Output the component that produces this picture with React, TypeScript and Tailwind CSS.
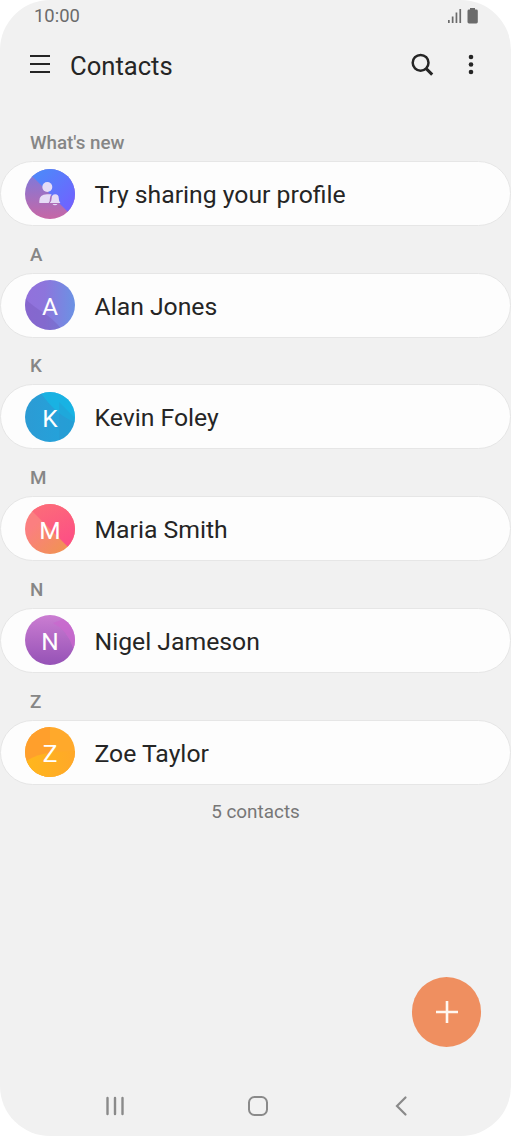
import type { ReactNode } from "react";

type Contact = {
  name: string;
  avatar: ReactNode;
};

const contacts: Contact[] = [
  {
    name: "Alan Jones",
    avatar: (
      <>
        <rect width="50" height="50" fill="url(#alan)" />
        <path d="M0 18C10 30 26 34 37 50H0Z" fill="#6c50b0" opacity="0.3" />
      </>
    ),
  },
  {
    name: "Kevin Foley",
    avatar: (
      <>
        <rect width="50" height="50" fill="url(#kevin)" />
        <path d="M15 0H50V30Q32 24 15 0Z" fill="#13bce8" opacity="0.65" />
        <path d="M34 10L50 26V50H34Z" fill="#2c94cc" opacity="0.35" />
      </>
    ),
  },
  {
    name: "Maria Smith",
    avatar: (
      <>
        <rect width="50" height="50" fill="url(#mariaLow)" />
        <path d="M0 0L8 8L43 43L50 50V0Z" fill="url(#mariaTop)" />
      </>
    ),
  },
  {
    name: "Nigel Jameson",
    avatar: (
      <>
        <rect width="50" height="50" fill="url(#nigel)" />
        <path d="M28 8Q43 16 48 33L50 33V0Z" fill="#c968ce" opacity="0.75" />
      </>
    ),
  },
  {
    name: "Zoe Taylor",
    avatar: (
      <>
        <rect width="50" height="50" fill="#ffa92b" />
        <path d="M0 0H25V50H0Z" fill="#ff9f2c" />
        <path d="M0 35Q14 24 50 24V50H0Z" fill="url(#zoe)" />
      </>
    ),
  },
];

const Gradients = () => (
  <svg className="absolute h-0 w-0" aria-hidden="true">
    <defs>
      <linearGradient id="profileTop" x1="0" y1="0" x2="1" y2="1">
        <stop offset="0.2" stopColor="#5086fa" />
        <stop offset="0.85" stopColor="#7062ff" />
      </linearGradient>
      <linearGradient id="profileLow" x1="0" y1="0" x2="0" y2="1">
        <stop offset="0.15" stopColor="#8278d8" />
        <stop offset="1" stopColor="#c767a5" />
      </linearGradient>
      <linearGradient id="alan">
        <stop stopColor="#9271dc" />
        <stop offset="0.4" stopColor="#8d75dc" />
        <stop offset="1" stopColor="#6b92e4" />
      </linearGradient>
      <linearGradient id="kevin">
        <stop stopColor="#2c9bd4" />
        <stop offset="1" stopColor="#22a4dc" />
      </linearGradient>
      <linearGradient id="mariaTop" x1="0.3" y1="0" x2="0.8" y2="1">
        <stop stopColor="#fc6c79" />
        <stop offset="0.85" stopColor="#fd4f85" />
      </linearGradient>
      <linearGradient id="mariaLow" x1="0.2" y1="0.4" x2="0.8" y2="1">
        <stop stopColor="#fb7f80" />
        <stop offset="1" stopColor="#f09450" />
      </linearGradient>
      <linearGradient id="nigel" x1="0" y1="0" x2="0" y2="1">
        <stop stopColor="#cb7dd2" />
        <stop offset="1" stopColor="#9552b6" />
      </linearGradient>
      <linearGradient id="zoe">
        <stop stopColor="#ffb71c" />
        <stop offset="1" stopColor="#ffa829" />
      </linearGradient>
    </defs>
  </svg>
);

const StatusBar = () => (
  <div className="flex h-8 shrink-0 items-center justify-between pr-8 pl-[34px]">
    <span className="text-[18.4px] leading-8 text-[#6b6b6b]">10:00</span>
    <svg width="31" height="18" viewBox="0 0 31 18" className="-mt-[3px]" fill="#6b6b6b">
      <rect x="0" y="14" width="1.7" height="3" />
      <rect x="3.8" y="10.5" width="1.7" height="6.5" />
      <rect x="7.6" y="6.5" width="1.7" height="10.5" />
      <rect x="11.4" y="3" width="1.7" height="14" />
      <path d="M22 2H27V3.6H28.3Q29.8 3.6 29.8 5V16Q29.8 17.4 28.3 17.4H21Q19.5 17.4 19.5 16V5Q19.5 3.6 21 3.6H22Z" />
    </svg>
  </div>
);

const Header = () => (
  <header className="flex h-[66px] shrink-0 items-center pr-[37px] pl-[30px] text-[#252525]">
    <svg width="20" height="20" viewBox="0 0 20 20" className="-mt-[1.5px]" stroke="currentColor" strokeWidth="2">
      <path d="M0 2H20M0 10H20M0 18H20" />
    </svg>
    <h1 className="ml-5 pt-0.5 text-[25.6px] leading-8">Contacts</h1>
    <svg width="24" height="24" viewBox="0 0 24 24" className="ml-auto" fill="none" stroke="currentColor" strokeWidth="2.5">
      <circle cx="10.6" cy="9.8" r="7.9" />
      <path d="M16.2 15.6L22.2 21.6" strokeWidth="3" />
    </svg>
    <svg width="6" height="22" viewBox="0 0 6 22" className="ml-[34px]" fill="currentColor">
      <circle cx="3" cy="3" r="2.3" />
      <circle cx="3" cy="10.5" r="2.3" />
      <circle cx="3" cy="18" r="2.3" />
    </svg>
  </header>
);

const Section = ({ label, name, children }: { label: string; name: string; children: ReactNode }) => (
  <section className="shrink-0">
    <h2 className="flex h-[46.7px] items-end pb-[5px] pl-[30px] text-[18.8px] leading-[26px] font-medium text-[#868686]">
      {label}
    </h2>
    <div className="flex h-[65px] items-center rounded-full border border-[#e6e6e6] bg-[#fdfdfd] pl-6">
      <div className="relative h-[50px] w-[50px] shrink-0 overflow-hidden rounded-full">{children}</div>
      <span className="ml-[19.5px] pt-[3px] text-[24.75px] leading-8 text-[#252525]">{name}</span>
    </div>
  </section>
);

const App = () => {
  return (
    <div className="h-[1136px] w-[511px] bg-white font-[Roboto,sans-serif]">
      <Gradients />
      <div className="relative flex h-full flex-col overflow-hidden rounded-[50px] bg-[#f1f1f1]">
        <StatusBar />
        <Header />
        <main className="flex flex-1 flex-col pt-[16.4px]">
          <Section label="What's new" name="Try sharing your profile">
            <svg width="50" height="50" viewBox="0 0 50 50">
              <rect width="50" height="50" fill="url(#profileLow)" />
              <path d="M0 0L50 50V0Z" fill="url(#profileTop)" />
              <g fill="#e5dcf6">
                <circle cx="22.3" cy="18" r="5" />
                <path d="M14.3 34V32Q14.3 25.2 22 25.2H26.6Q24.8 27 24.8 30V31.3Q24.8 32.5 23.7 34Z" />
                <path d="M24.8 34Q26.6 32.5 26.6 29.5Q26.8 25.3 30.2 25.3Q33.7 25.3 33.8 29.5Q33.8 32.5 35.4 34Z" />
                <path d="M27.5 35H32.5Q31.7 36.3 30 36.3Q28.3 36.3 27.5 35Z" />
              </g>
            </svg>
          </Section>
          {contacts.map((contact) => (
            <Section key={contact.name} label={contact.name[0]} name={contact.name}>
              <svg width="50" height="50" viewBox="0 0 50 50">
                {contact.avatar}
              </svg>
              <span className="absolute inset-0 flex items-center justify-center pt-1 text-[24.5px] leading-8 text-white">
                {contact.name[0]}
              </span>
            </Section>
          ))}
          <p className="mt-[14px] text-center text-[18.9px] leading-[26px] text-[#777777]">5 contacts</p>
        </main>
        <nav className="flex h-[61px] shrink-0 items-center justify-between pr-[103px] pl-[105px] text-[#8a8a8a]">
          <svg width="20" height="20" viewBox="0 0 20 20" stroke="currentColor" strokeWidth="2.4" strokeLinecap="round">
            <path d="M2.5 2V18M10 2V18M17.5 2V18" />
          </svg>
          <svg width="22" height="22" viewBox="0 0 22 22" className="mr-[3px]" fill="none" stroke="currentColor" strokeWidth="2">
            <rect x="2" y="2" width="18" height="18" rx="5.5" />
          </svg>
          <svg width="14" height="22" viewBox="0 0 14 22" fill="none" stroke="currentColor" strokeWidth="2.2" strokeLinecap="round">
            <path d="M11.5 2.5L3 11L11.5 19.5" />
          </svg>
        </nav>
        <button
          aria-label="Add contact"
          className="absolute right-[29.75px] bottom-[89.5px] flex h-[69.5px] w-[69.5px] items-center justify-center rounded-full bg-[#ef8f60]"
        >
          <svg width="24" height="24" viewBox="0 0 24 24" stroke="#fff7f0" strokeWidth="2.6">
            <path d="M12 1V23M1 12H23" />
          </svg>
        </button>
      </div>
    </div>
  );
};

export default App;
